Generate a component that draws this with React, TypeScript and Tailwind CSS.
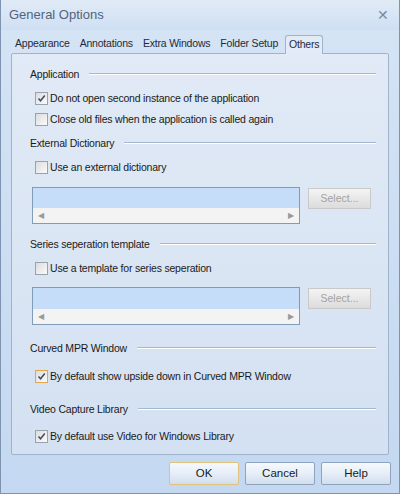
import React from "react";

const font = { fontFamily: '"Liberation Sans", Arial, sans-serif' };

function CheckBox({ checked, hot }: { checked?: boolean; hot?: boolean }) {
  return (
    <span
      className={`flex h-[13px] w-[13px] shrink-0 items-center justify-center border bg-gradient-to-br from-[#dcdcdc] to-[#fbfbfb] ${
        hot ? "border-[#e0a84a]" : "border-[#9aa3ad]"
      }`}
    >
      {checked && (
        <svg width="9" height="9" viewBox="0 0 9 9">
          <path d="M1.5 4.5 L3.5 6.8 L7.8 1.5" fill="none" stroke="#3c4e6a" strokeWidth="1.5" />
        </svg>
      )}
    </span>
  );
}

function Header({ title, className }: { title: string; className?: string }) {
  return (
    <div className={`flex h-[14px] items-center pl-[18px] pr-[12px] ${className ?? ""}`}>
      <span className="text-[10.5px] leading-[14px] tracking-[-0.2px] text-[#1a1a1a]">{title}</span>
      <span className="ml-[10px] flex-1 border-b border-t border-b-white border-t-[#a6b8cf]" />
    </div>
  );
}

function Check({ label, checked, hot, className }: { label: string; checked?: boolean; hot?: boolean; className?: string }) {
  return (
    <div className={`flex h-[20px] items-center gap-[2px] pl-[23px] ${className ?? ""}`}>
      <CheckBox checked={checked} hot={hot} />
      <span className="text-[10.5px] leading-[14px] tracking-[-0.2px] text-[#1a1a1a]">{label}</span>
    </div>
  );
}

function ListRow({ className, h }: { className?: string; h: string }) {
  return (
    <div className={`flex items-start pl-[20px] ${className ?? ""}`}>
      <div className={`flex w-[268px] flex-col border border-[#7f9db9] bg-white ${h}`}>
        <div className="flex-1 bg-[#c6ddfa]" />
        <div className="flex h-[15px] items-center justify-between bg-[#f3f3f3] px-[5px] text-[8px] text-[#9a9a9a]">
          <span>◀</span>
          <span>▶</span>
        </div>
      </div>
      <div className="ml-[8px] mt-[1px] flex h-[21px] w-[63px] items-center justify-center border border-[#c9c9c9] bg-gradient-to-b from-[#f4f4f4] to-[#dcdcdc] text-[10.5px] text-[#a3a3a3]">
        Select...
      </div>
    </div>
  );
}

function Button({ label, def }: { label: string; def?: boolean }) {
  return (
    <div
      className={`flex h-[23px] w-[70px] items-center justify-center rounded-[2px] border bg-gradient-to-b from-[#f6f9fd] via-[#e6eef8] to-[#d2deed] text-[11.5px] text-[#1a1a1a] ${
        def ? "border-[#e2c37a]" : "border-[#8ea3bd]"
      }`}
    >
      {label}
    </div>
  );
}

export default function App() {
  const tabs = ["Appearance", "Annotations", "Extra Windows", "Folder Setup"];
  return (
    <div
      className="flex h-[494px] w-[400px] flex-col border-x border-b border-[#7d93b0] bg-gradient-to-b from-[#d5e4f5] to-[#c4d8f1]"
      style={font}
    >
      <div className="flex h-[30px] items-center justify-between bg-gradient-to-b from-[#e1ebf7] to-[#cfdff3] pl-[8px] pr-[10px]">
        <span className="text-[13px] text-[#52637c]">General Options</span>
        <span className="text-[14px] text-[#7b8aa0]">✕</span>
      </div>
      <div className="flex h-[23px] items-end pl-[11px] pt-[5px]">
        {tabs.map((t) => (
          <span key={t} className="mb-[1px] mr-[4px] px-[3px] pb-[2px] text-[10.5px] leading-[14px] tracking-[-0.2px] text-[#1e2a3a]">
            {t}
          </span>
        ))}
        <span className="relative top-[1px] flex h-[19px] items-start rounded-t-[3px] border border-b-0 border-[#9fb3cb] bg-[#e3ebf6] px-[3px] pt-[1px] text-[10.5px] leading-[14px] tracking-[-0.2px] text-[#1e2a3a]">
          Others
        </span>
      </div>
      <div className="mx-[10px] h-[402px] rounded-[2px] border border-[#9fb3cb] bg-gradient-to-b from-[#e1eaf6] to-[#d4e1f2] pt-[13px]">
        <Header title="Application" />
        <Check className="mt-[7px]" label="Do not open second instance of the application" checked />
        <Check className="mt-[1px]" label="Close old files when the application is called again" />
        <Header className="mt-[7px]" title="External Dictionary" />
        <Check className="mt-[7px]" label="Use an external dictionary" />
        <ListRow className="mt-[10px]" h="h-[37px]" />
        <Header className="mt-[13px]" title="Series seperation template" />
        <Check className="mt-[7px]" label="Use a template for series seperation" />
        <ListRow className="mt-[9px]" h="h-[38px]" />
        <Header className="mt-[16px]" title="Curved MPR Window" />
        <Check className="mt-[11px]" label="By default show upside down in Curved MPR Window" checked hot />
        <Header className="mt-[16px]" title="Video Capture Library" />
        <Check className="mt-[10px]" label="By default use Video for Windows Library" checked />
      </div>
      <div className="mt-[7px] flex justify-end gap-[6px] pr-[8px]">
        <Button label="OK" def />
        <Button label="Cancel" />
        <Button label="Help" />
      </div>
    </div>
  );
}
